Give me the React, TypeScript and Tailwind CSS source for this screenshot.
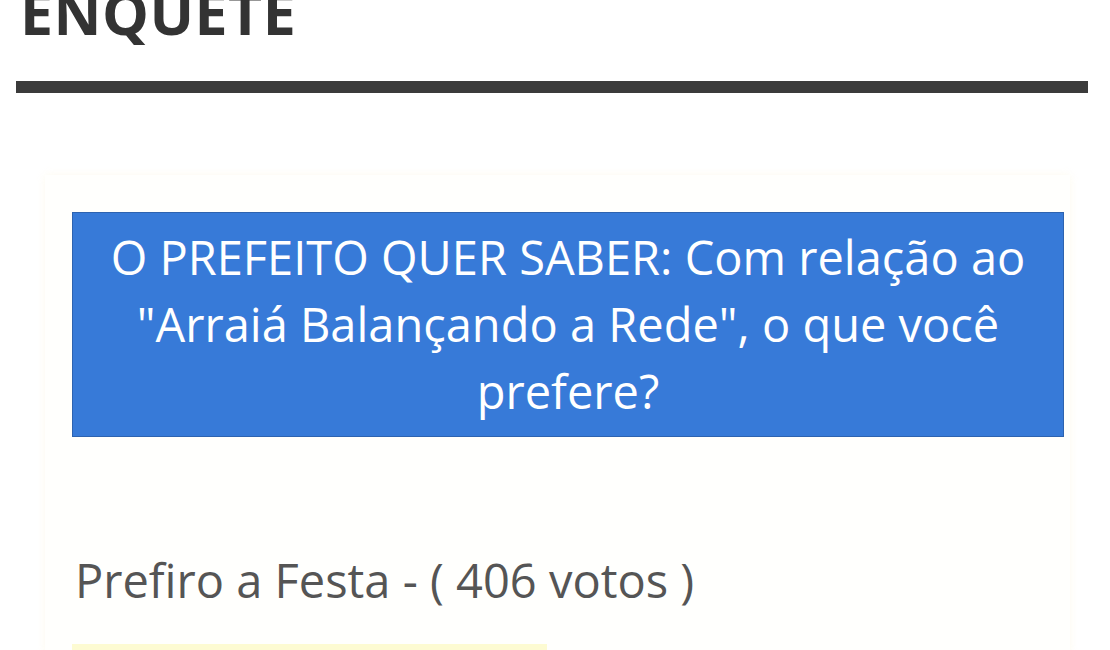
export default function App() {
  return (
    <div className="w-[1110px] h-[650px] overflow-hidden bg-white font-['Open_Sans',sans-serif]">
      {/* Section header */}
      <div className="px-4">
        <h2 className="mt-[-20px] pl-1 text-[59px] leading-[64px] font-bold text-[#333] tracking-[0.5px]">
          ENQUETE
        </h2>
        <div className="mt-[37px] h-[12px] w-[1072px] bg-[#3b3b3b]" />
      </div>

      {/* Poll card */}
      <div className="mt-[82px] ml-[45px] w-[1025px] bg-[#fffffd] shadow-[0_0_8px_rgba(250,240,200,0.3)] pt-[37px] pl-[27px] pr-[6px]">
        <div className="w-[992px] h-[225px] flex items-center justify-center bg-[#377ad8] border border-[#2d63b0] px-6 text-center text-white text-[47px] leading-[67px]">
          <p>
            O PREFEITO QUER SABER: Com relação ao "Arraiá Balançando a Rede", o que você prefere?
          </p>
        </div>

        <div className="mt-[115px] pl-[3px] text-[47px] leading-[56px] text-[#555]">
          Prefiro a Festa - ( 406 votos )
        </div>
        <div className="mt-[36px] h-[10px] w-[475px] bg-[#fdfbd2]" />
      </div>
    </div>
  );
}
